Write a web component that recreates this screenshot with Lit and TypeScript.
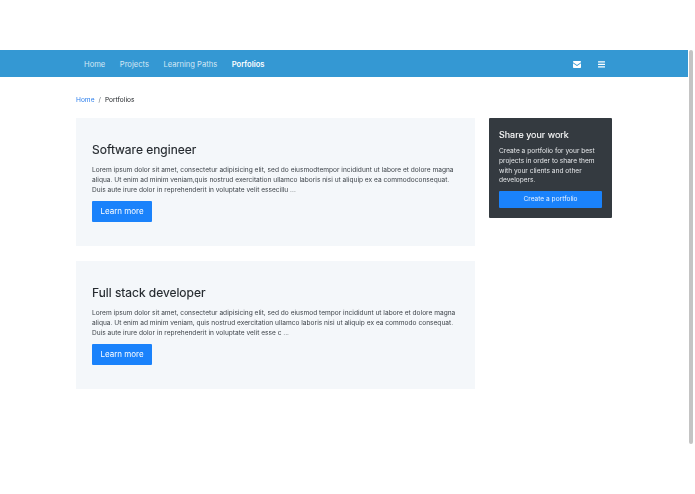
import { LitElement, html, css } from "lit";
import { customElement } from "lit/decorators.js";

@customElement("app-root")
export class AppRoot extends LitElement {
  static styles = css`
    :host { display: block; font-family: Inter, "Liberation Sans", sans-serif; height: 494px; background: #fff; color: #212529; overflow: hidden; }
    .page { display: flex; height: 494px; padding-top: 50px; box-sizing: border-box; filter: blur(0.3px); }
    .main { width: 688px; flex: none; }
    .scroll { width: 4px; margin-left: 1px; height: 394px; background: #c4c4c4; border-radius: 2px; }
    nav { height: 27px; background: #3498d3; display: flex; align-items: center; padding: 1px 83px 0 84px; box-sizing: border-box; font-size: 7.6px; color: #d5e8f5; }
    nav a { margin-right: 14.5px; }
    nav a.active { color: #fff; font-weight: 600; }
    .icons { margin-left: auto; display: flex; gap: 17px; align-items: center; }
    .icons svg { display: block; fill: #fff; }
    .content { padding: 18px 0 0 76px; }
    .crumb { font-size: 6.6px; line-height: 10px; display: flex; gap: 4px; color: #212529; margin-bottom: 13px; }
    .crumb a { color: #2f80ed; }
    .crumb span { color: #6c757d; }
    .cols { display: flex; align-items: flex-start; gap: 14px; }
    .left { width: 399px; display: flex; flex-direction: column; gap: 15px; }
    .jumbo { height: 128px; box-sizing: border-box; background: #f4f7fa; padding: 23px 16px 0; }
    h2 { margin: 0 0 8px; font-size: 12px; font-weight: 400; line-height: 17px; color: #24292e; -webkit-text-stroke: 0.15px #24292e; }
    p { margin: 0 0 6px; font-size: 6.6px; line-height: 9.75px; color: #3d4349; white-space: nowrap; }
    .btn { display: block; background: #1a82fb; color: #fff; width: 60px; height: 21px; line-height: 21px; text-align: center; font-size: 8px; border-radius: 1px; }
    .side { width: 123px; height: 100px; box-sizing: border-box; background: #343a40; padding: 10px 10px 0; border-radius: 1px; color: #fff; }
    h3 { margin: 0 0 6px; font-size: 9px; font-weight: 400; line-height: 13px; -webkit-text-stroke: 0.1px #fff; }
    .side p { color: #e6e8ea; line-height: 9.75px; margin-bottom: 5px; }
    .cta { background: #1a82fb; color: #e9f3ff; height: 17px; line-height: 17px; text-align: center; font-size: 6.6px; border-radius: 1px; }
  `;

  render() {
    return html`
      <div class="page">
        <div class="main">
          <nav>
            <a>Home</a><a>Projects</a><a>Learning Paths</a><a class="active">Porfolios</a>
            <div class="icons">
              <svg width="8" height="7" viewBox="0 0 8 7"><path d="M.7 0h6.6c.4 0 .7.3.7.7v.5L4 3.9 0 1.2V.7C0 .3.3 0 .7 0z"/><path d="M0 2.2l4 2.7 4-2.7v4.1c0 .4-.3.7-.7.7H.7C.3 7 0 6.700 0 6.300z"/></svg>
              <svg width="7" height="7" viewBox="0 0 7 7"><rect y="0.300" width="7" height="1.300" rx=".3"/><rect y="2.800" width="7" height="1.300" rx=".3"/><rect y="5.300" width="7" height="1.300" rx=".3"/></svg>
            </div>
          </nav>
          <div class="content">
            <div class="crumb"><a>Home</a><span>/</span>Portfolios</div>
            <div class="cols">
              <div class="left">
                <div class="jumbo">
                  <h2>Software engineer</h2>
                  <p>Lorem ipsum dolor sit amet, consectetur adipisicing elit, sed do eiusmodtempor incididunt ut labore et dolore magna<br>aliqua. Ut enim ad minim veniam,quis nostrud exercitation ullamco laboris nisi ut aliquip ex ea commodoconsequat.<br>Duis aute irure dolor in reprehenderit in voluptate velit essecillu ...</p>
                  <a class="btn">Learn more</a>
                </div>
                <div class="jumbo">
                  <h2>Full stack developer</h2>
                  <p>Lorem ipsum dolor sit amet, consectetur adipisicing elit, sed do eiusmod tempor incididunt ut labore et dolore magna<br>aliqua. Ut enim ad minim veniam, quis nostrud exercitation ullamco laboris nisi ut aliquip ex ea commodo consequat.<br>Duis aute irure dolor in reprehenderit in voluptate velit esse c ...</p>
                  <a class="btn">Learn more</a>
                </div>
              </div>
              <aside class="side">
                <h3>Share your work</h3>
                <p>Create a portfolio for your best<br>projects in order to share them<br>with your clients and other<br>developers.</p>
                <div class="cta">Create a portfolio</div>
              </aside>
            </div>
          </div>
        </div>
        <div class="scroll"></div>
      </div>
    `;
  }
}
